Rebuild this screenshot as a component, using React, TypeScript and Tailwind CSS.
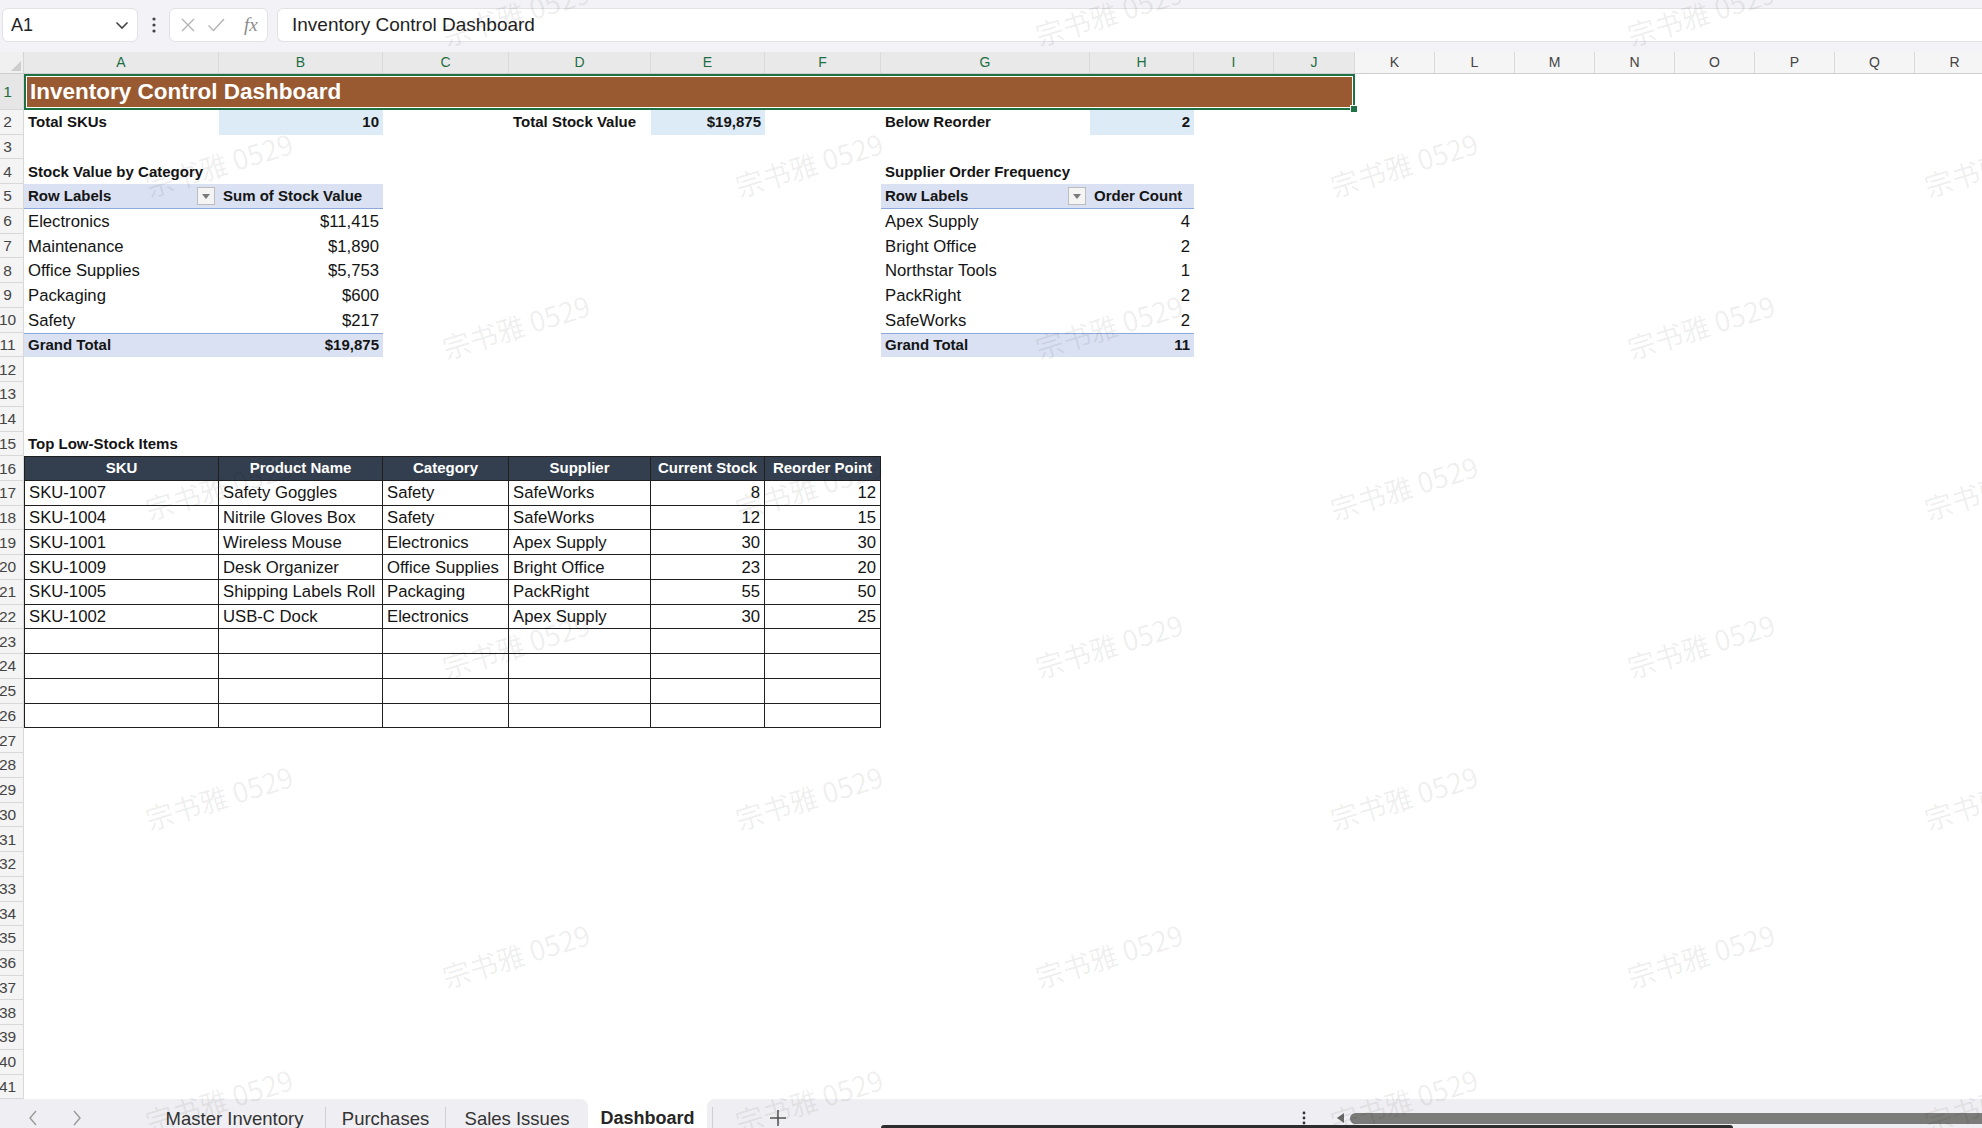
import clsx from "clsx";

const COLS = ["A", "B", "C", "D", "E", "F", "G", "H", "I", "J", "K", "L", "M", "N", "O", "P", "Q", "R"];
const WIDTHS = [
  "w-[195px]", "w-[164px]", "w-[126px]", "w-[142px]", "w-[114px]", "w-[116px]", "w-[209px]", "w-[104px]", "w-[80px]", "w-[81px]",
  "w-[80px]", "w-[80px]", "w-[80px]", "w-[80px]", "w-[80px]", "w-[80px]", "w-[80px]", "w-[80px]",
];

type Cell = { t?: string; b?: boolean; align?: "right" | "center"; cls?: string; filter?: boolean };
type RowMap = Record<number, Record<number, Cell>>;

const KPI = "bg-[#ddebf7]";
const PIVOT_HEAD = "bg-[#d9e1f2] border-b border-[#8ea9db]";
const PIVOT_TOTAL = "bg-[#d9e1f2] border-t border-[#8ea9db]";

const categories = [
  ["Electronics", "$11,415"],
  ["Maintenance", "$1,890"],
  ["Office Supplies", "$5,753"],
  ["Packaging", "$600"],
  ["Safety", "$217"],
];
const suppliers = [
  ["Apex Supply", "4"],
  ["Bright Office", "2"],
  ["Northstar Tools", "1"],
  ["PackRight", "2"],
  ["SafeWorks", "2"],
];
const tableHead = ["SKU", "Product Name", "Category", "Supplier", "Current Stock", "Reorder Point"];
const lowStock = [
  ["SKU-1007", "Safety Goggles", "Safety", "SafeWorks", "8", "12"],
  ["SKU-1004", "Nitrile Gloves Box", "Safety", "SafeWorks", "12", "15"],
  ["SKU-1001", "Wireless Mouse", "Electronics", "Apex Supply", "30", "30"],
  ["SKU-1009", "Desk Organizer", "Office Supplies", "Bright Office", "23", "20"],
  ["SKU-1005", "Shipping Labels Roll", "Packaging", "PackRight", "55", "50"],
  ["SKU-1002", "USB-C Dock", "Electronics", "Apex Supply", "30", "25"],
];

function buildRows(): RowMap {
  const rows: RowMap = {
    2: {
      0: { t: "Total SKUs", b: true },
      1: { t: "10", b: true, align: "right", cls: KPI },
      3: { t: "Total Stock Value", b: true },
      4: { t: "$19,875", b: true, align: "right", cls: KPI },
      6: { t: "Below Reorder", b: true },
      7: { t: "2", b: true, align: "right", cls: KPI },
    },
    4: {
      0: { t: "Stock Value by Category", b: true },
      6: { t: "Supplier Order Frequency", b: true },
    },
    5: {
      0: { t: "Row Labels", b: true, filter: true, cls: PIVOT_HEAD },
      1: { t: "Sum of Stock Value", b: true, cls: PIVOT_HEAD },
      6: { t: "Row Labels", b: true, filter: true, cls: PIVOT_HEAD },
      7: { t: "Order Count", b: true, cls: PIVOT_HEAD },
    },
    11: {
      0: { t: "Grand Total", b: true, cls: PIVOT_TOTAL },
      1: { t: "$19,875", b: true, align: "right", cls: PIVOT_TOTAL },
      6: { t: "Grand Total", b: true, cls: PIVOT_TOTAL },
      7: { t: "11", b: true, align: "right", cls: PIVOT_TOTAL },
    },
    15: { 0: { t: "Top Low-Stock Items", b: true } },
  };

  categories.forEach(([label, value], i) => {
    rows[6 + i] = {
      0: { t: label },
      1: { t: value, align: "right" },
      6: { t: suppliers[i][0] },
      7: { t: suppliers[i][1], align: "right" },
    };
  });

  rows[16] = {};
  tableHead.forEach((h, c) => {
    rows[16][c] = {
      t: h,
      b: true,
      align: "center",
      cls: clsx("border-y border-r border-[#1f1f1f] bg-[#333f4f] text-white", c === 0 && "border-l"),
    };
  });

  for (let r = 0; r < 10; r++) {
    const data = lowStock[r];
    rows[17 + r] = {};
    for (let c = 0; c < 6; c++) {
      rows[17 + r][c] = {
        t: data?.[c],
        align: c >= 4 ? "right" : undefined,
        cls: clsx("border-b border-r border-[#1f1f1f]", c === 0 && "border-l"),
      };
    }
  }
  return rows;
}

const ROWS = buildRows();

// watermark grid, centre points
const WATERMARKS: [number, number][] = [
  ...[219, 809, 1404, 1998].flatMap((x) => [164, 487, 797, 1100].map((y) => [x, y] as [number, number])),
  ...[516, 1109, 1701].flatMap((x) => [13, 326, 645, 955].map((y) => [x, y] as [number, number])),
];

function FilterButton() {
  return (
    <span className="ml-auto flex h-[18px] w-[18px] shrink-0 items-center justify-center border border-[#bdbdbd] bg-[#f4f4f4]">
      <svg width="8" height="5" viewBox="0 0 8 5">
        <path d="M0 0h8L4 5z" fill="#7a7a7a" />
      </svg>
    </span>
  );
}

function CellBox({ i, cell }: { i: number; cell?: Cell }) {
  return (
    <div
      className={clsx(
        WIDTHS[i],
        "flex h-full shrink-0 items-center overflow-hidden whitespace-nowrap px-[4px]",
        cell?.align === "right" && "justify-end",
        cell?.align === "center" && "justify-center",
        cell?.b ? "text-[15px] font-bold" : "text-[16.7px]",
        cell?.cls
      )}
    >
      {cell?.t}
      {cell?.filter && <FilterButton />}
    </div>
  );
}

function RowHead({ n, sel }: { n: number; sel?: boolean }) {
  return (
    <div
      className={clsx(
        "flex h-full w-[24px] shrink-0 items-center overflow-hidden border-r border-b border-[#d8d8d8] text-[15.5px]",
        sel ? "bg-[#e6e6e6] text-[#1e6e42]" : "bg-[#f4f4f4] text-[#444]"
      )}
    >
      <span className="-ml-[8px] w-[31px] shrink-0 text-center">{n}</span>
    </div>
  );
}

function FormulaBar() {
  return (
    <div className="flex h-[52px] shrink-0 items-start bg-[#f3f2f6] pt-[8px]">
      <div className="ml-[2px] flex h-[34px] w-[136px] items-center justify-between rounded-[6px] border border-[#e2e1e5] bg-white px-[8px]">
        <span className="text-[18px] text-[#1f1f1f]">A1</span>
        <svg width="14" height="9" viewBox="0 0 14 9">
          <path d="M1.5 1.5l5.5 5.5 5.5-5.5" fill="none" stroke="#444" strokeWidth="1.6" />
        </svg>
      </div>
      <div className="flex h-[34px] w-[31px] items-center justify-center">
        <svg width="4" height="16" viewBox="0 0 4 16">
          <circle cx="2" cy="2" r="1.6" fill="#444" />
          <circle cx="2" cy="8" r="1.6" fill="#444" />
          <circle cx="2" cy="14" r="1.6" fill="#444" />
        </svg>
      </div>
      <div className="flex h-[34px] w-[99px] items-center rounded-[6px] border border-[#e2e1e5] bg-white pl-[10px]">
        <svg width="16" height="16" viewBox="0 0 16 16">
          <path d="M2 2l12 12M14 2L2 14" stroke="#b4b4b4" strokeWidth="1.4" />
        </svg>
        <svg className="ml-[11px]" width="18" height="16" viewBox="0 0 18 16">
          <path d="M1.5 8.5l5 5L17 2" fill="none" stroke="#b4b4b4" strokeWidth="1.4" />
        </svg>
        <span className="ml-[19px] font-['Liberation_Serif',serif] text-[19px] italic text-[#8a8a8a]">fx</span>
      </div>
      <div className="ml-[9px] flex h-[34px] flex-1 items-center rounded-l-[6px] border border-r-0 border-[#e2e1e5] bg-white pl-[14px] text-[19px] text-[#1f1f1f]">
        Inventory Control Dashboard
      </div>
    </div>
  );
}

function ColumnHeader() {
  return (
    <div className="flex h-[22px] shrink-0 border-b border-[#cfcfcf] bg-[#f5f5f5]">
      <div className="flex w-[24px] shrink-0 items-end justify-end border-r border-[#d4d4d4] bg-[#f0f0f0] p-[2px]">
        <svg width="10" height="10" viewBox="0 0 10 10">
          <path d="M10 0v10H0z" fill="#cdcdcd" />
        </svg>
      </div>
      {COLS.map((c, i) => (
        <div
          key={c}
          className={clsx(
            WIDTHS[i],
            "flex shrink-0 items-center justify-center border-r border-[#dadada] text-[14px]",
            i < 10 ? "bg-[#e9e9e9] text-[#1e6e42]" : "text-[#444]"
          )}
        >
          {c}
        </div>
      ))}
    </div>
  );
}

function TabBar() {
  return (
    <div className="relative flex min-h-0 flex-1 overflow-hidden bg-white">
      <div className="flex h-[38px] w-[588px] shrink-0 items-center rounded-tr-[8px] bg-[#efeef2] text-[18.5px] text-[#333]">
        <div className="flex w-[144px] shrink-0 items-center">
          <svg className="ml-[28px]" width="10" height="16" viewBox="0 0 10 16">
            <path d="M8 1L2 8l6 7" fill="none" stroke="#9a9a9a" strokeWidth="1.4" />
          </svg>
          <svg className="ml-[34px]" width="10" height="16" viewBox="0 0 10 16">
            <path d="M2 1l6 7-6 7" fill="none" stroke="#9a9a9a" strokeWidth="1.4" />
          </svg>
        </div>
        <div className="flex w-[181px] shrink-0 justify-center whitespace-nowrap">Master Inventory</div>
        <div className="h-[22px] w-px shrink-0 bg-[#cfcfd3]" />
        <div className="flex w-[119px] shrink-0 justify-center">Purchases</div>
        <div className="h-[22px] w-px shrink-0 bg-[#cfcfd3]" />
        <div className="flex w-[142px] shrink-0 justify-center whitespace-nowrap">Sales Issues</div>
      </div>
      <div className="flex h-[38px] w-[119px] shrink-0 items-center justify-center bg-white text-[18px] font-bold text-[#262626]">
        Dashboard
      </div>
      <div className="flex h-[38px] flex-1 items-center rounded-tl-[8px] bg-[#efeef2]">
        <div className="ml-[5px] h-[22px] w-px shrink-0 bg-[#cfcfd3]" />
        <svg className="ml-[56px] shrink-0" width="18" height="18" viewBox="0 0 18 18">
          <path d="M9 1v16M1 9h16" stroke="#555" strokeWidth="1.5" />
        </svg>
        <svg className="ml-[515px] shrink-0" width="4" height="14" viewBox="0 0 4 14">
          <circle cx="2" cy="2" r="1.4" fill="#333" />
          <circle cx="2" cy="7" r="1.4" fill="#333" />
          <circle cx="2" cy="12" r="1.4" fill="#333" />
        </svg>
        <svg className="ml-[31px] shrink-0" width="7" height="10" viewBox="0 0 7 10">
          <path d="M7 0v10L0 5z" fill="#6a6a6a" />
        </svg>
        <div className="-mr-[20px] ml-[6px] h-[11px] flex-1 rounded-full bg-[#7b7b79]" />
      </div>
      <div className="absolute bottom-0 left-[881px] h-[3px] w-[852px] rounded-t-[3px] bg-[#2d2d2d]" />
    </div>
  );
}

export default function App() {
  const rowNumbers = Array.from({ length: 40 }, (_, i) => i + 2);
  return (
    <div className="relative flex h-[1128px] w-[1982px] flex-col overflow-hidden bg-white font-['Liberation_Sans',Arial,sans-serif] text-[#141414]">
      <FormulaBar />
      <ColumnHeader />

      <div className="flex h-[36px] shrink-0">
        <RowHead n={1} sel />
        <div className="relative flex w-[1331px] shrink-0 items-center border-2 border-[#1e7145] bg-[#995a31] pl-[4px] text-[22.5px] font-bold whitespace-nowrap text-white shadow-[inset_0_0_0_1px_#ffffff]">
          Inventory Control Dashboard
          <span className="absolute -right-[5px] -bottom-[5px] h-[8px] w-[8px] border border-white bg-[#1e7145]" />
        </div>
      </div>

      {rowNumbers.map((n) => (
        <div key={n} className="flex h-[24.74px] shrink-0">
          <RowHead n={n} />
          {COLS.map((c, i) => (
            <CellBox key={c} i={i} cell={ROWS[n]?.[i]} />
          ))}
        </div>
      ))}

      <TabBar />

      {WATERMARKS.map(([x, y]) => (
        <div
          key={`${x}-${y}`}
          className="pointer-events-none absolute z-50 -translate-x-1/2 -translate-y-1/2 -rotate-[17deg] font-['Noto_Sans_CJK_SC',sans-serif] text-[28px] whitespace-nowrap text-black/[0.07]"
          style={{ left: x, top: y }}
        >
          宗书雅 0529
        </div>
      ))}
    </div>
  );
}
